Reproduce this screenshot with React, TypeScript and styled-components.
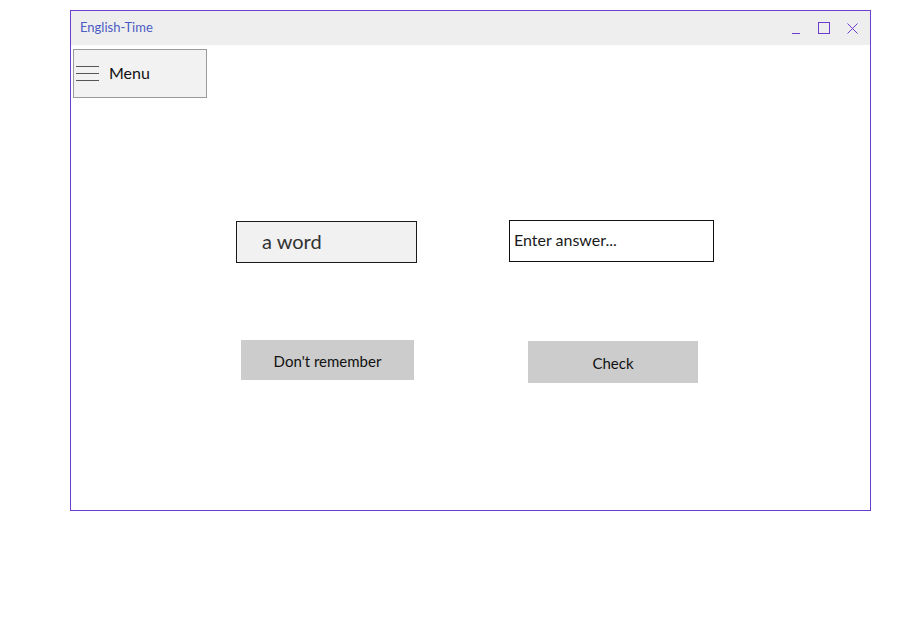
import React from 'react'
import styled, {createGlobalStyle} from 'styled-components'

const GlobalStyle = createGlobalStyle`
    html, body, #root {
        margin: 0;
        padding: 0;
        background: #ffffff;
    }

    body {
        font-family: Lato, "Noto Sans", sans-serif;
    }
`

const Page = styled.div`
    width: 920px;
    height: 621px;
    padding: 10px 0 0 70px;
    box-sizing: border-box;
`

const Window = styled.div`
    width: 801px;
    height: 501px;
    box-sizing: border-box;
    border: 1px solid #6a3fd0;
    display: flex;
    flex-direction: column;
`

const TitleBar = styled.div`
    height: 34px;
    box-sizing: border-box;
    background: #eeeeee;
    display: flex;
    align-items: center;
    padding: 0 10px 2px 9px;
    flex-shrink: 0;
`

const Title = styled.span`
    font-size: 13px;
    color: #4a5cc4;
    flex: 1;
`

const Controls = styled.div`
    display: flex;
    align-items: center;
    gap: 12px;
    padding-top: 2px;
`

const ControlButton = styled.button`
    width: 16px;
    height: 16px;
    padding: 0;
    border: none;
    background: transparent;
    display: flex;
    align-items: center;
    justify-content: center;
    color: #6a3fd0;
`

const Content = styled.div`
    flex: 1;
    display: flex;
    flex-direction: column;
    padding: 4px 0 0 2px;
`

const MenuButton = styled.button`
    width: 134px;
    height: 49px;
    box-sizing: border-box;
    background: #f2f2f2;
    border: 1px solid #9a9a9a;
    display: flex;
    align-items: center;
    gap: 9px;
    padding: 0 0 2px 2px;
    font-family: inherit;
    font-size: 16px;
    color: #111111;
`

const Row = styled.div<{$top: number; $left: number; $gap: number}>`
    display: flex;
    align-items: flex-start;
    margin-top: ${p => p.$top}px;
    padding-left: ${p => p.$left}px;
    gap: ${p => p.$gap}px;
`

const WordBox = styled.div`
    width: 181px;
    height: 42px;
    margin-top: 1px;
    box-sizing: border-box;
    border: 1px solid #1a1a1a;
    background: #f1f1f1;
    display: flex;
    align-items: center;
    padding: 0 0 3px 25px;
    font-size: 20px;
    color: #333333;
`

const AnswerInput = styled.input`
    width: 205px;
    height: 42px;
    box-sizing: border-box;
    border: 1px solid #111111;
    padding: 0 0 4px 4px;
    font-family: inherit;
    font-size: 16px;
    outline: none;

    &::placeholder {
        color: #1a1a1a;
        opacity: 1;
    }
`

const ActionButton = styled.button<{$w: number; $h: number; $offset?: number}>`
    width: ${p => p.$w}px;
    height: ${p => p.$h}px;
    margin-top: ${p => p.$offset ?? 0}px;
    background: #cccccc;
    border: none;
    font-family: inherit;
    font-size: 15px;
    color: #111111;
    padding: 2px 0 0;
`

const Hamburger = () => (
    <svg width="24" height="18" viewBox="0 0 24 18">
        <path d="M0 2.5h23M0 9.5h23M0 16.5h23" stroke="#555" strokeWidth="1"/>
    </svg>
)

export default function App() {
    return (
        <>
            <GlobalStyle/>
            <Page>
                <Window>
                    <TitleBar>
                        <Title>English-Time</Title>
                        <Controls>
                            <ControlButton aria-label="minimize">
                                <svg width="10" height="12" viewBox="0 0 10 12">
                                    <path d="M1 11.5h8" stroke="currentColor" strokeWidth="1"/>
                                </svg>
                            </ControlButton>
                            <ControlButton aria-label="maximize">
                                <svg width="12" height="12" viewBox="0 0 12 12">
                                    <rect x="0.5" y="0.5" width="11" height="11" fill="none" stroke="currentColor" strokeWidth="1"/>
                                </svg>
                            </ControlButton>
                            <ControlButton aria-label="close">
                                <svg width="11" height="11" viewBox="0 0 11 11">
                                    <path d="M0.5 0.5l10 10M10.5 0.5l-10 10" stroke="currentColor" strokeWidth="1"/>
                                </svg>
                            </ControlButton>
                        </Controls>
                    </TitleBar>
                    <Content>
                        <MenuButton>
                            <Hamburger/>
                            Menu
                        </MenuButton>
                        <Row $top={122} $left={163} $gap={92}>
                            <WordBox>a word</WordBox>
                            <AnswerInput placeholder="Enter answer..."/>
                        </Row>
                        <Row $top={77} $left={168} $gap={114}>
                            <ActionButton $w={173} $h={40}>Don't remember</ActionButton>
                            <ActionButton $w={170} $h={42} $offset={1}>Check</ActionButton>
                        </Row>
                    </Content>
                </Window>
            </Page>
        </>
    )
}
